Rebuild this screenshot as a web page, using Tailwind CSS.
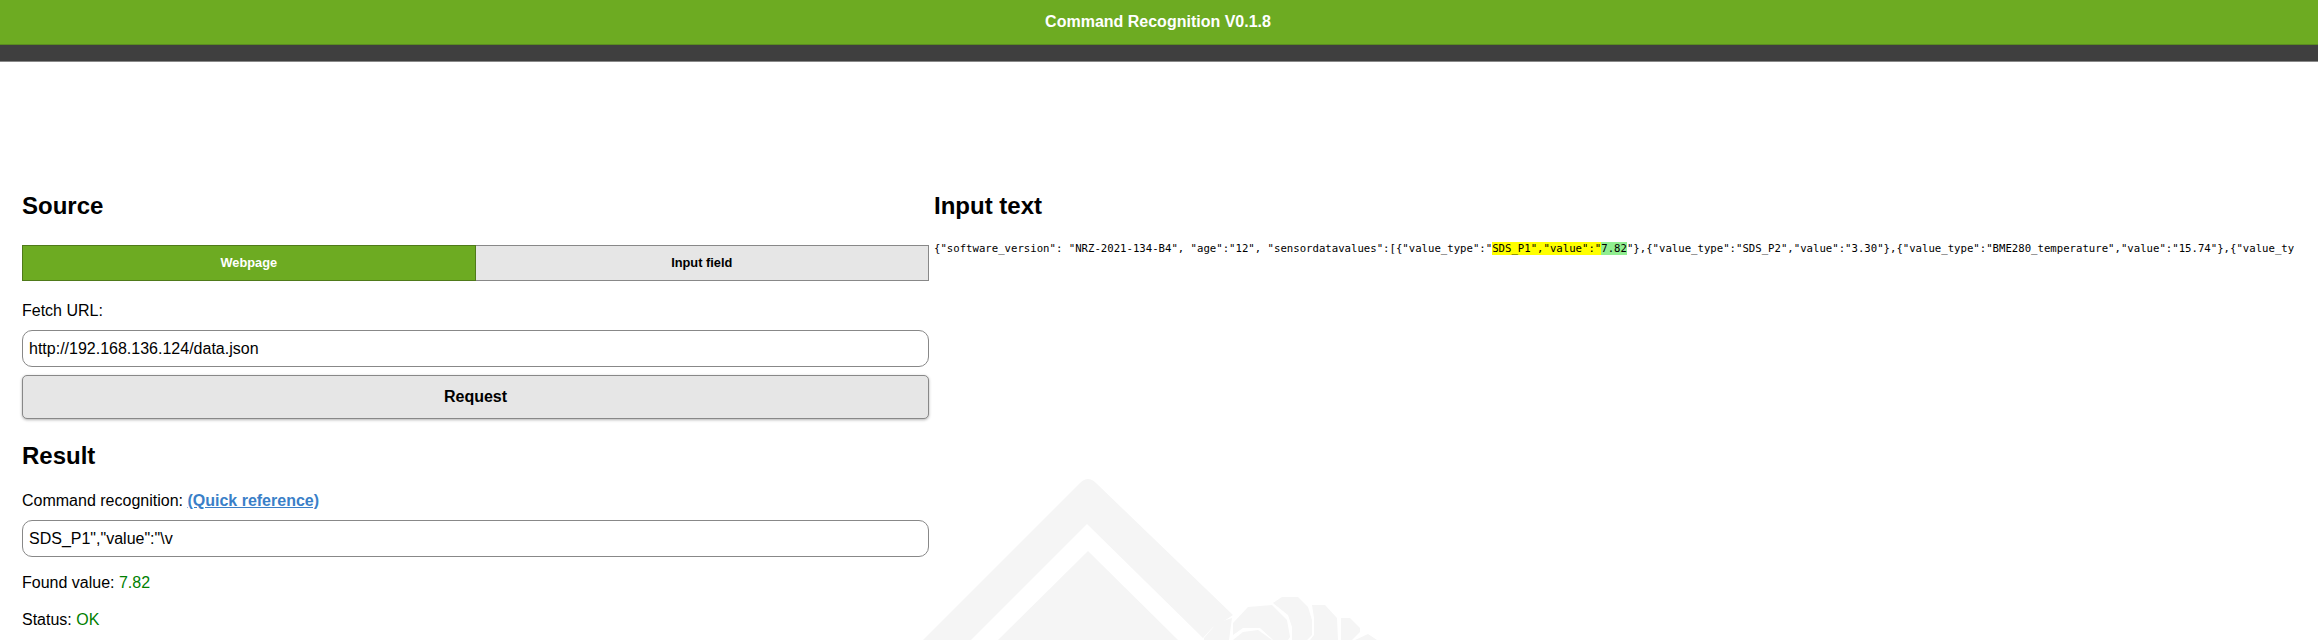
<!doctype html>
<html><head><meta charset="utf-8"><script src="https://cdn.jsdelivr.net/npm/@tailwindcss/browser@4"></script></head>
<body class="relative h-[640px] w-[2318px] overflow-hidden bg-white font-['Liberation_Sans',sans-serif] text-black">
<svg class="absolute left-[880px] top-[460px] z-0" width="620" height="180" viewBox="880 460 620 180" fill="#f5f5f5">
<path d="M923 640 L1080 483 Q1088 475 1096 483 L1233 615 L1224 621 L1213 627 L1203 638 L1087 524 L971 640 Z"/>
<path d="M1088 551 L998 640 L1178 640 Z"/>
<path d="M1204 640 L1204 638 L1217 623 L1232 618 L1229 640 Z"/>
<path d="M1233 623 L1248 607 L1272 605 L1287 620 L1290 637 L1288 640 L1273 640 L1260 628 L1243 628 L1233 635 Z"/>
<path d="M1233 640 L1243 632 L1258 630 L1272 640 Z"/>
<path d="M1273 603 L1282 597 L1298 597 L1308 607 L1312 620 L1312 635 L1307 640 L1292 640 L1292 627 L1288 615 Z"/>
<path d="M1312 605 L1325 605 L1337 618 L1338 640 L1310 640 L1314 635 L1314 618 Z"/>
<path d="M1341 618 L1350 618 L1360 628 L1360 632 L1352 640 L1341 640 Z"/>
<path d="M1355 640 L1368 634 L1377 640 Z"/>
</svg>
<div class="relative z-10">
<header class="border-b border-b-[#888]">
<div class="flex h-[45px] items-center justify-center border-b border-b-[#5a8d1f] bg-[#6dab22] pr-[2px] text-[16px] font-bold text-white">Command Recognition V0.1.8</div>
<div class="h-[16px] bg-[#3f3f3f]"></div>
</header>
<main class="grid grid-cols-[907px_1fr] gap-[5px] pl-[22px] pt-[129px]">
<section>
<h2 class="h-[30px] text-[24px] font-bold leading-[30px]">Source</h2>
<div class="mt-[24px] flex h-[36px] text-[12.8px] font-bold">
<div class="flex w-1/2 items-center justify-center border border-[#4f7a1a] bg-[#6dab22] text-white">Webpage</div>
<div class="flex w-1/2 items-center justify-center border border-l-0 border-[#888] bg-[#e6e6e6]">Input field</div>
</div>
<p class="mt-[18px] text-[16px] leading-[24px]">Fetch URL:</p>
<div class="mt-[7px] flex h-[37px] items-center rounded-[10px] border border-[#888] bg-white px-[6px] text-[16px]">http://192.168.136.124/data.json</div>
<button class="mt-[8px] block h-[44px] w-full rounded-[5px] border border-[#888] bg-[#e6e6e6] text-[16px] font-bold shadow-[0_1px_3px_rgba(0,0,0,0.3)]">Request</button>
<h2 class="mt-[22px] h-[30px] text-[24px] font-bold leading-[30px]">Result</h2>
<p class="mt-[18px] text-[16px] leading-[24px]">Command recognition: <a class="font-bold text-[#3a7fc8] underline">(Quick reference)</a></p>
<div class="mt-[7px] flex h-[37px] items-center rounded-[10px] border border-[#888] bg-white px-[6px] text-[16px]">SDS_P1","value":"\v</div>
<p class="mt-[14px] text-[16px] leading-[24px]">Found value: <span class="text-[#008000]">7.82</span></p>
<p class="mt-[13px] text-[16px] leading-[24px]">Status: <span class="text-[#008000]">OK</span></p>
</section>
<section class="min-w-0">
<h2 class="h-[30px] text-[24px] font-bold leading-[30px]">Input text</h2>
<pre class="mt-[18px] w-[1360px] overflow-hidden font-['DejaVu_Sans_Mono',monospace] text-[10.67px] leading-[20px]">{"software_version": "NRZ-2021-134-B4", "age":"12", "sensordatavalues":[{"value_type":"<mark class="bg-[#ffff00]">SDS_P1","value":"</mark><mark class="bg-[#90ee90]">7.82</mark>"},{"value_type":"SDS_P2","value":"3.30"},{"value_type":"BME280_temperature","value":"15.74"},{"value_type":"BME280_humidity","value":"60.12"}]}</pre>
</section>
</main>
</div>
</body></html>
